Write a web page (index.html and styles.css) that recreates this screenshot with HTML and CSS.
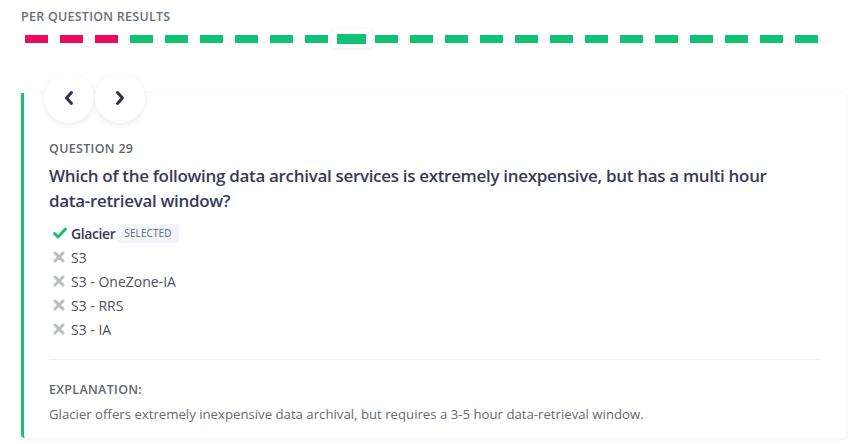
FILE: index.html
```html
<!DOCTYPE html>
<html>
<head>
<meta charset="utf-8">
<link rel="stylesheet" href="styles.css">
</head>
<body>
<div class="results">
  <div class="results-title">PER QUESTION RESULTS</div>
  <div class="bars">
    <div class="cell"><span class="bar wrong"></span></div>
    <div class="cell"><span class="bar wrong"></span></div>
    <div class="cell"><span class="bar wrong"></span></div>
    <div class="cell"><span class="bar right"></span></div>
    <div class="cell"><span class="bar right"></span></div>
    <div class="cell"><span class="bar right"></span></div>
    <div class="cell"><span class="bar right"></span></div>
    <div class="cell"><span class="bar right"></span></div>
    <div class="cell"><span class="bar right"></span></div>
    <div class="cell active"><span class="bar right"></span></div>
    <div class="cell"><span class="bar right"></span></div>
    <div class="cell"><span class="bar right"></span></div>
    <div class="cell"><span class="bar right"></span></div>
    <div class="cell"><span class="bar right"></span></div>
    <div class="cell"><span class="bar right"></span></div>
    <div class="cell"><span class="bar right"></span></div>
    <div class="cell"><span class="bar right"></span></div>
    <div class="cell"><span class="bar right"></span></div>
    <div class="cell"><span class="bar right"></span></div>
    <div class="cell"><span class="bar right"></span></div>
    <div class="cell"><span class="bar right"></span></div>
    <div class="cell"><span class="bar right"></span></div>
    <div class="cell"><span class="bar right"></span></div>
  </div>
</div>

<div class="card">
  <div class="nav">
    <button class="nav-btn" aria-label="Previous">
      <svg width="12" height="16" viewBox="0 0 12 16"><path d="M8.5 2.5 L3.5 8 L8.5 13.5" fill="none" stroke="#2f2f55" stroke-width="3" stroke-linecap="round" stroke-linejoin="round"/></svg>
    </button>
    <button class="nav-btn" aria-label="Next">
      <svg width="12" height="16" viewBox="0 0 12 16"><path d="M3.5 2.5 L8.5 8 L3.5 13.5" fill="none" stroke="#2f2f55" stroke-width="3" stroke-linecap="round" stroke-linejoin="round"/></svg>
    </button>
  </div>
  <div class="q-label">QUESTION 29</div>
  <div class="q-text">Which of the following data archival services is extremely inexpensive, but has a multi hour data-retrieval window?</div>
  <ul class="options">
    <li class="option correct">
      <svg class="icon" width="14" height="12" viewBox="0 0 14 12"><path d="M1.5 6.5 L5 10 L12.5 2" fill="none" stroke="#1fbb72" stroke-width="3" stroke-linecap="round" stroke-linejoin="round"/></svg>
      <span class="opt-name">Glacier</span><span class="badge">SELECTED</span>
    </li>
    <li class="option">
      <svg class="icon" width="14" height="12" viewBox="0 0 14 12"><path d="M3 2 L11 10 M11 2 L3 10" fill="none" stroke="#b9bdc6" stroke-width="3" stroke-linecap="round"/></svg>
      <span>S3</span>
    </li>
    <li class="option">
      <svg class="icon" width="14" height="12" viewBox="0 0 14 12"><path d="M3 2 L11 10 M11 2 L3 10" fill="none" stroke="#b9bdc6" stroke-width="3" stroke-linecap="round"/></svg>
      <span>S3 - OneZone-IA</span>
    </li>
    <li class="option">
      <svg class="icon" width="14" height="12" viewBox="0 0 14 12"><path d="M3 2 L11 10 M11 2 L3 10" fill="none" stroke="#b9bdc6" stroke-width="3" stroke-linecap="round"/></svg>
      <span>S3 - RRS</span>
    </li>
    <li class="option">
      <svg class="icon" width="14" height="12" viewBox="0 0 14 12"><path d="M3 2 L11 10 M11 2 L3 10" fill="none" stroke="#b9bdc6" stroke-width="3" stroke-linecap="round"/></svg>
      <span>S3 - IA</span>
    </li>
  </ul>
  <div class="divider"></div>
  <div class="exp-label">EXPLANATION:</div>
  <div class="exp-text">Glacier offers extremely inexpensive data archival, but requires a 3-5 hour data-retrieval window.</div>
</div>
</body>
</html>
```

FILE: styles.css
```css
* { box-sizing: border-box; }
html, body { margin: 0; padding: 0; }
body {
  background: #fff;
  font-family: "Open Sans", "Noto Sans", sans-serif;
  width: 854px;
  height: 444px;
  overflow: hidden;
}
.results {
  padding: 9px 0 0 19px;
  height: 56px;
}
.results-title {
  margin-left: 2px;
  font-size: 12.5px;
  line-height: 16px;
  font-weight: 600;
  color: #6b6f78;
  letter-spacing: 0.25px;
}
.bars {
  display: flex;
  margin-top: 10px;
}
.cell {
  width: 35px;
  height: 8px;
  display: flex;
  justify-content: center;
  align-items: center;
  position: relative;
}
.bar {
  display: block;
  width: 23px;
  height: 8px;
}
.bar.wrong { background: #ec0a5c; }
.bar.right { background: #10c273; }
.cell.active::before {
  content: "";
  position: absolute;
  left: -2px;
  top: -6px;
  width: 39px;
  height: 19px;
  background: #fff;
  box-shadow: 0 1px 4px rgba(0,0,0,0.1);
}
.cell.active .bar {
  width: 29px;
  height: 10px;
  position: relative;
}
.card {
  position: relative;
  margin: 37px 0 0 21px;
  width: 825px;
  height: 345px;
  background: #fff;
  border-left: 3px solid #1fbd75;
  border-radius: 0 2px 4px 4px;
  box-shadow: 0 1px 4px rgba(0,0,0,0.08);
  padding: 48px 25px 14px 25px;
}
.nav {
  position: absolute;
  left: 20px;
  top: -20px;
  display: flex;
  gap: 1px;
}
.nav-btn {
  width: 50px;
  height: 50px;
  border-radius: 50%;
  border: none;
  background: #fff;
  box-shadow: 0 2px 6px rgba(0,0,0,0.08);
  display: flex;
  align-items: center;
  justify-content: center;
  padding: 0;
}
.q-label {
  font-size: 12.5px;
  line-height: 16px;
  font-weight: 600;
  color: #62666f;
  letter-spacing: 0.3px;
}
.q-text {
  margin-top: 6px;
  font-size: 17px;
  line-height: 25px;
  font-weight: 600;
  color: #383a5a;
  width: 745px;
  letter-spacing: -0.32px;
}
.options {
  list-style: none;
  margin: 8px 0 0 0;
  padding: 0;
}
.option {
  display: flex;
  align-items: center;
  height: 24px;
  font-size: 14px;
  color: #4d5060;
}
.option .icon {
  margin: 0 5px 0 3px;
}
.option.correct .icon { margin-left: 4px; margin-right: 4px; }
.opt-name {
  font-weight: 600;
  color: #383a5a;
  letter-spacing: -0.4px;
}
.badge {
  margin-left: 2px;
  background: #f1f4f8;
  color: #5d6b80;
  font-size: 10px;
  line-height: 19px;
  padding: 0 7px;
  border-radius: 2px;
  letter-spacing: 0.1px;
}
.divider {
  margin-top: 18px;
  height: 1px;
  background: #ececef;
  width: 771px;
}
.exp-label {
  margin-top: 22px;
  font-size: 12.5px;
  line-height: 16px;
  font-weight: 600;
  color: #62666f;
  letter-spacing: 0.3px;
}
.exp-text {
  margin-top: 6px;
  font-size: 13.2px;
  line-height: 20px;
  color: #666a73;
}
```
